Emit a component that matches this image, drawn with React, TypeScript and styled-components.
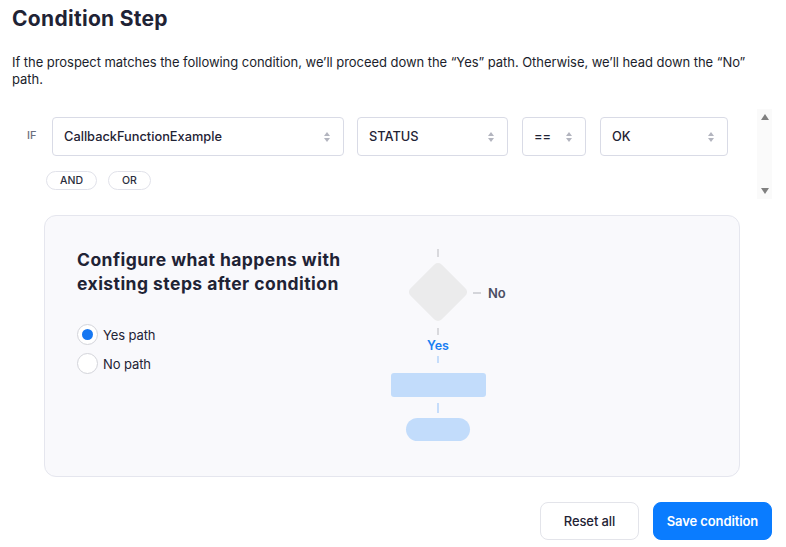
import styled, { createGlobalStyle } from 'styled-components';

const GlobalStyle = createGlobalStyle`
	body {
		margin: 0;
		background: #ffffff;
		font-family: Inter, "Noto Sans", sans-serif;
		color: #1f2335;
	}
`;

const Page = styled.div`
	width: 786px;
	box-sizing: border-box;
	padding: 0 14px 0 12px;
`;

const Title = styled.h1`
	margin: 0;
	padding-top: 6px;
	font-size: 21px;
	line-height: 26px;
	font-weight: 700;
	letter-spacing: 0.3px;
`;

const Description = styled.p`
	width: 760px;
	margin: 22px 0 0;
	font-size: 13px;
	line-height: 17px;
	letter-spacing: -0.05px;
	color: #1b1e2c;
`;

const ConditionArea = styled.div`
	display: flex;
	margin-top: 21px;
	height: 90px;
`;

const Rules = styled.div`
	flex: 1;
	padding-top: 8px;
`;

const RuleRow = styled.div`
	display: flex;
	align-items: center;
`;

const IfLabel = styled.span`
	width: 25px;
	margin-left: 15px;
	margin-top: -3px;
	font-size: 11px;
	font-weight: 500;
	color: #6b6f80;
`;

const Select = styled.div<{ $width: number; $gap?: number }>`
	display: flex;
	align-items: center;
	justify-content: space-between;
	box-sizing: border-box;
	width: ${(p) => p.$width}px;
	height: 39px;
	margin-left: ${(p) => p.$gap ?? 0}px;
	padding: 0 12px 0 11px;
	border: 1px solid #d9dbe6;
	border-radius: 4px;
	background: #fff;
	font-size: 12.8px;
	font-weight: 500;
	color: #1f2335;
`;

const Carets = styled.svg`
	flex: none;
`;

const LogicRow = styled.div`
	display: flex;
	gap: 11px;
	margin: 15px 0 0 34px;
`;

const Pill = styled.button`
	height: 19px;
	padding: 0 13px;
	border: 1px solid #e1e2ea;
	border-radius: 10px;
	background: #fff;
	font-family: inherit;
	font-size: 10.5px;
	font-weight: 500;
	color: #2a2d3c;
	line-height: 17px;
`;

const ScrollTrack = styled.div`
	display: flex;
	flex-direction: column;
	justify-content: space-between;
	align-items: center;
	width: 15px;
	padding: 4px 0;
	box-sizing: border-box;
	background: #fafafa;
`;

const Card = styled.div`
	display: flex;
	box-sizing: border-box;
	width: 696px;
	height: 262px;
	margin: 16px 0 0 32px;
	padding: 32px 32px;
	background: #f9f9fc;
	border: 1px solid #e5e6ee;
	border-radius: 12px;
`;

const Options = styled.div`
	width: 303px;
`;

const CardHeading = styled.h2`
	margin: 0;
	font-size: 17.5px;
	line-height: 24px;
	font-weight: 700;
	letter-spacing: 0.45px;
	color: #1f2335;
`;

const RadioList = styled.div`
	display: flex;
	flex-direction: column;
	gap: 8px;
	margin-top: 28px;
`;

const RadioRow = styled.label`
	display: flex;
	align-items: center;
	gap: 5px;
	font-size: 13px;
	letter-spacing: -0.1px;
	color: #1f2335;
`;

const RadioCircle = styled.span<{ $checked?: boolean }>`
	display: flex;
	align-items: center;
	justify-content: center;
	box-sizing: border-box;
	width: 21px;
	height: 21px;
	border: 1px solid #d3d4da;
	border-radius: 50%;
	background: #fff;
	&::after {
		content: '';
		display: ${(p) => (p.$checked ? 'block' : 'none')};
		width: 11px;
		height: 11px;
		border-radius: 50%;
		background: #1677f2;
	}
`;

const Flow = styled.svg`
	margin-top: -2px;
	flex: none;
`;

const Actions = styled.div`
	display: flex;
	justify-content: flex-end;
	gap: 14px;
	margin-top: 25px;
`;

const ActionButton = styled.button<{ $primary?: boolean }>`
	box-sizing: border-box;
	width: ${(p) => (p.$primary ? 119 : 99)}px;
	height: 38px;
	border-radius: 8px;
	border: 1px solid ${(p) => (p.$primary ? '#0a7cff' : '#e3e4ea')};
	background: ${(p) => (p.$primary ? '#0a7cff' : '#fff')};
	color: ${(p) => (p.$primary ? '#fff' : '#1f2335')};
	font-family: inherit;
	font-size: 13px;
	font-weight: ${(p) => (p.$primary ? 600 : 500)};
	letter-spacing: -0.1px;
`;

const SortCarets = () => (
	<Carets width="8" height="12" viewBox="0 0 8 12">
		<path d="M4 1 L7 5 H1 Z" fill="#b3b5bf" />
		<path d="M4 11 L7 7 H1 Z" fill="#b3b5bf" />
	</Carets>
);

const fields = [
	{ label: 'CallbackFunctionExample', width: 292, gap: 0 },
	{ label: 'STATUS', width: 151, gap: 13 },
	{ label: '==', width: 64, gap: 14 },
	{ label: 'OK', width: 128, gap: 14 },
];

const App = () => {
	return (
		<Page>
			<GlobalStyle />
			<Title>Condition Step</Title>
			<Description>
				If the prospect matches the following condition, we’ll proceed down the “Yes” path. Otherwise, we’ll head down the “No”
				path.
			</Description>

			<ConditionArea>
				<Rules>
					<RuleRow>
						<IfLabel>IF</IfLabel>
						{fields.map((f) => (
							<Select key={f.label} $width={f.width} $gap={f.gap}>
								<span>{f.label}</span>
								<SortCarets />
							</Select>
						))}
					</RuleRow>
					<LogicRow>
						<Pill>AND</Pill>
						<Pill>OR</Pill>
					</LogicRow>
				</Rules>
				<ScrollTrack>
					<svg width="10" height="8" viewBox="0 0 10 8">
						<path d="M5 1 L9 7 H1 Z" fill="#808080" />
					</svg>
					<svg width="10" height="8" viewBox="0 0 10 8">
						<path d="M5 7 L9 1 H1 Z" fill="#808080" />
					</svg>
				</ScrollTrack>
			</ConditionArea>

			<Card>
				<Options>
					<CardHeading>
						Configure what happens with
						<br />
						existing steps after condition
					</CardHeading>
					<RadioList>
						<RadioRow>
							<RadioCircle $checked />
							Yes path
						</RadioRow>
						<RadioRow>
							<RadioCircle />
							No path
						</RadioRow>
					</RadioList>
				</Options>

				<Flow width="140" height="200" viewBox="0 0 140 200">
					{/* branch diamond with its two exits */}
					<line x1="58" y1="3" x2="58" y2="11" stroke="#d9d9dd" strokeWidth="2" />
					<rect x="-22" y="-22" width="44" height="44" rx="5" fill="#ebebec" transform="translate(58 46) rotate(45)" />
					<line x1="93" y1="47" x2="101" y2="47" stroke="#d4d5da" strokeWidth="2" />
					<text x="108" y="52" fontSize="13" fontWeight="600" fill="#4b4f63" fontFamily="Inter, sans-serif">
						No
					</text>
					<line x1="58" y1="82" x2="58" y2="89" stroke="#d9d9dd" strokeWidth="2" />
					<text x="58" y="104" textAnchor="middle" fontSize="12.5" fontWeight="600" fill="#1a7ef2" fontFamily="Inter, sans-serif">
						Yes
					</text>
					{/* steps that follow the yes branch */}
					<line x1="58" y1="110" x2="58" y2="117" stroke="#c6ddfb" strokeWidth="2" />
					<rect x="11" y="127" width="95" height="24" rx="3" fill="#c2dcfb" />
					<line x1="58" y1="157" x2="58" y2="167" stroke="#c6ddfb" strokeWidth="2" />
					<rect x="26" y="172" width="64" height="23" rx="11.5" fill="#c2dcfb" />
				</Flow>
			</Card>

			<Actions>
				<ActionButton>Reset all</ActionButton>
				<ActionButton $primary>Save condition</ActionButton>
			</Actions>
		</Page>
	);
};

export default App;
